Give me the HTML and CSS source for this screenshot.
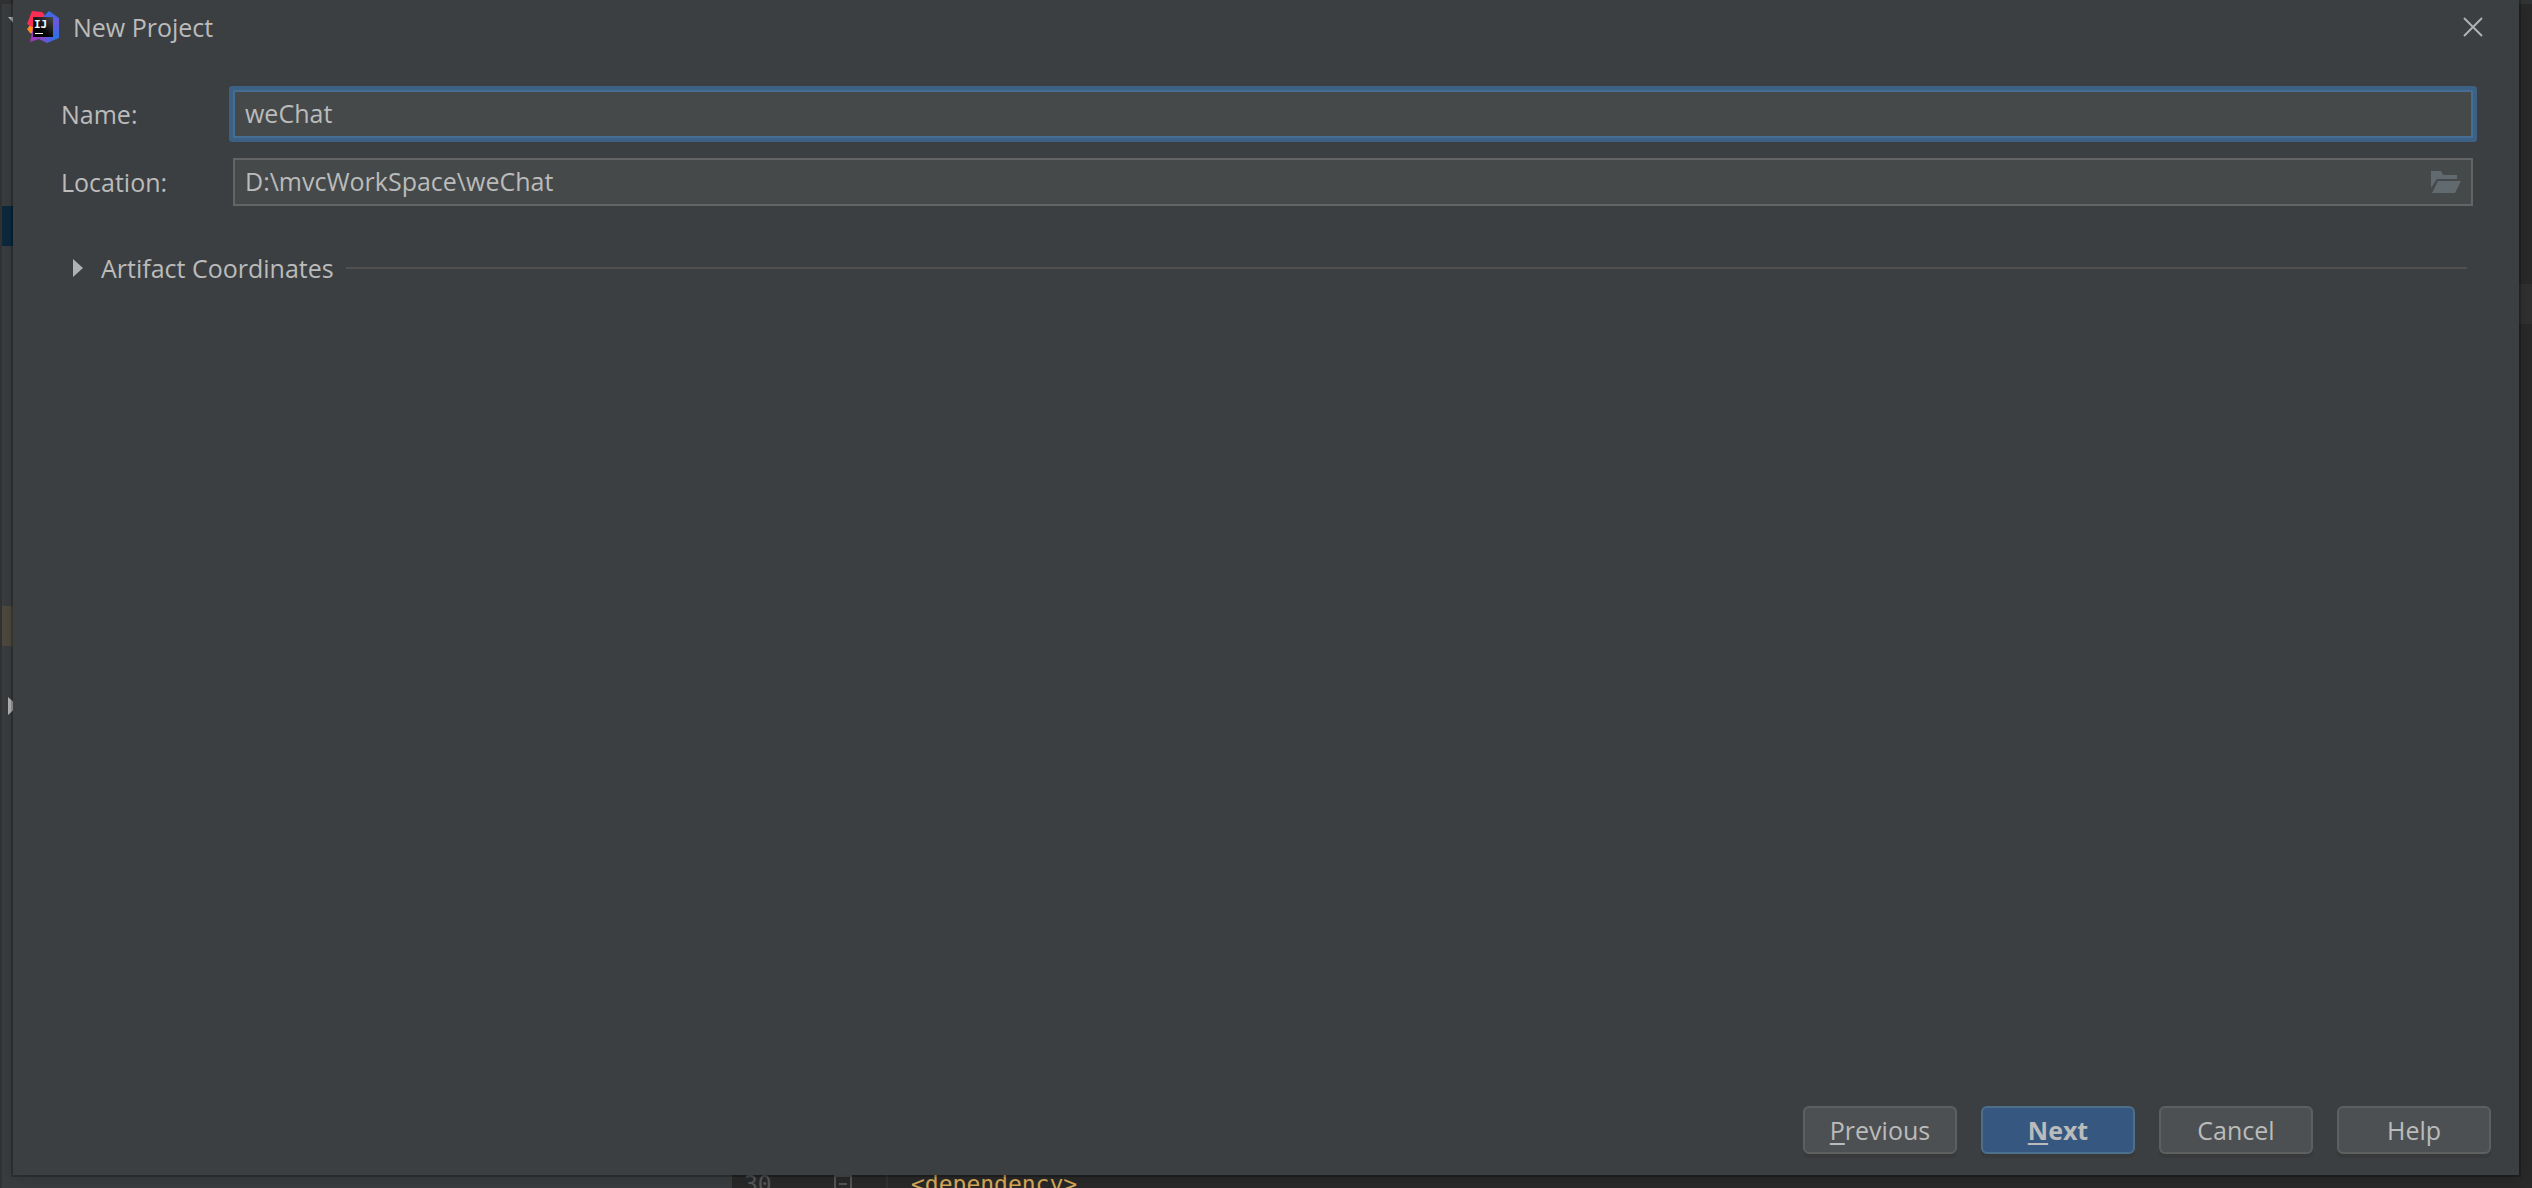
FILE: index.html
```html
<!DOCTYPE html>
<html lang="en">

<head>
    <meta charset="UTF-8">
    <meta name="viewport" content="width=device-width, initial-scale=1.0">
    <title>New Project</title>
    <link rel="stylesheet" href="styles.css">
</head>

<body>
    <!-- IDE window behind the dialog -->
    <div class="ide">
        <div class="tree">
            <div class="tree-row row-first">
                <svg class="tree-arrow" viewBox="0 0 18 18"><path d="M0 0h18L9 10z" /></svg>
            </div>
            <div class="tree-row row-selected"></div>
            <div class="tree-row row-excluded"></div>
            <div class="tree-row row-libraries">
                <svg class="tree-arrow" viewBox="0 0 18 18"><path d="M0 0v18l10-9z" /></svg>
            </div>
        </div>
        <div class="editor">
            <div class="code-row row-current"></div>
            <div class="code-row row-code">
                <span class="line-number">30</span>
                <svg class="fold" viewBox="0 0 18 18"><path d="M1 1h16v16H1zM5 9h8" /></svg>
                <code class="code">&lt;dependency&gt;</code>
            </div>
        </div>
    </div>

    <!-- New Project dialog -->
    <form class="dialog">
        <header class="title-bar">
            <svg class="logo" viewBox="0 0 32 32">
                <defs>
                    <linearGradient id="blue" x1="0" y1="0" x2="0" y2="1">
                        <stop offset="0" stop-color="#2d6fe8" />
                        <stop offset="0.35" stop-color="#6b57dd" />
                        <stop offset="0.8" stop-color="#2f6fe6" />
                    </linearGradient>
                    <linearGradient id="purple" x1="0" y1="0" x2="1" y2="0">
                        <stop offset="0" stop-color="#a135b5" />
                        <stop offset="0.4" stop-color="#8b45cc" />
                        <stop offset="1" stop-color="#2f6fe6" />
                    </linearGradient>
                    <linearGradient id="black" x1="1" y1="0" x2="0.4" y2="0.7">
                        <stop offset="0" stop-color="#4a4a4a" />
                        <stop offset="1" stop-color="#000" />
                    </linearGradient>
                </defs>
                <path fill="#ff8a1e" d="M4 13 0 18l3 4 6 2V13z" />
                <path fill="#fc2d54" d="M5 0 0 13l7 4 12-8-2-6-2-2z" />
                <path fill="url(#blue)" d="m22 0 10 7v20l-12 5-4-26z" />
                <path fill="url(#purple)" d="m6 17-3 14 9-3 8 4 8-5z" />
                <path fill="url(#black)" d="M6 6h20v20H6z" />
                <text class="logo-text" x="7" y="17">IJ</text>
                <path fill="#fff" d="M8 22h8v1H8z" />
            </svg>
            <h1 class="title">New Project</h1>
            <button type="button" class="close" aria-label="Close">
                <svg viewBox="0 0 20 20"><path d="m1 1 18 18M19 1 1 19" /></svg>
            </button>
        </header>

        <main class="content">
            <div class="form-group">
                <label for="name">Name:</label>
                <div class="field focused">
                    <input type="text" id="name" value="weChat" spellcheck="false">
                </div>
            </div>
            <div class="form-group">
                <label for="location">Location:</label>
                <div class="field">
                    <input type="text" id="location" value="D:\mvcWorkSpace\weChat" spellcheck="false">
                    <button type="button" class="browse" aria-label="Browse">
                        <svg viewBox="0 0 30 22"><path d="M0 0h10l2 4h14v4H6L0 17zM7 10h23l-6 12H1z" /></svg>
                    </button>
                </div>
            </div>

            <div class="section">
                <button type="button" class="section-toggle" aria-expanded="false">
                    <svg viewBox="0 0 10 18"><path d="M0 0v18l10-9z" /></svg>
                    Artifact Coordinates
                </button>
                <div class="section-line"></div>
            </div>
        </main>

        <footer class="buttons">
            <button type="button" class="btn"><u>P</u>revious</button>
            <button type="button" class="btn btn-default"><u>N</u>ext</button>
            <button type="button" class="btn">Cancel</button>
            <button type="button" class="btn">Help</button>
        </footer>
    </form>
</body>

</html>
```

FILE: styles.css
```css
* {
    box-sizing: border-box;
}

body {
    margin: 0;
    height: 100vh;
    position: relative;
    overflow: hidden;
    background-color: #323232;
    color: #bbbbbb;
    font-family: "Open Sans", "Noto Sans", sans-serif;
    font-size: 25px;
    line-height: 32px;
}

button,
input {
    font: inherit;
    color: inherit;
}

svg {
    display: block;
}

/* IDE window */
.ide {
    display: flex;
    height: 100%;
    padding-left: 2px;
}

.tree {
    width: 730px;
    display: grid;
    grid-auto-rows: 40px;
    padding-top: 2px;
    border-top: 4px solid #303233;
    background-color: #3a3d3f;
}

.tree-row {
    display: flex;
    align-items: center;
    padding-left: 6px;
}

.row-first {
    grid-row: 1;
}

.row-selected {
    grid-row: 6;
    background-color: #0d293e;
}

.row-excluded {
    grid-row: 16;
    background-color: #4d493e;
}

.row-libraries {
    grid-row: 18;
}

.tree-arrow {
    width: 18px;
    height: 18px;
    fill: #b5b5b5;
}

.editor {
    flex: 1;
    display: grid;
    grid-auto-rows: 40px;
    border-top: 4px solid #313435;
    background-color: #292929;
}

.row-current {
    grid-row: 8;
    background-color: #303030;
}

.row-code {
    grid-row: 30;
    display: flex;
    align-items: center;
    font-family: "DejaVu Sans Mono", monospace;
    font-size: 23px;
}

.line-number {
    width: 102px;
    padding-left: 12px;
    color: #55585a;
}

.fold {
    width: 18px;
    height: 18px;
    margin-right: 34px;
    fill: none;
    stroke: #555555;
    stroke-width: 2;
}

.code {
    height: 40px;
    padding-left: 23px;
    border-left: 2px solid #323232;
    font: inherit;
    line-height: 40px;
    color: #d9a957;
}

/* Dialog */
.dialog {
    position: absolute;
    inset: 0 13px 13px;
    display: flex;
    flex-direction: column;
    background-color: #3c3f41;
    box-shadow: 0 0 0 2px rgba(0, 0, 0, 0.2), 0 2px 14px rgba(0, 0, 0, 0.2);
}

.title-bar {
    display: flex;
    align-items: center;
    gap: 14px;
    height: 54px;
    padding: 0 36px 0 14px;
}

.logo {
    width: 32px;
    height: 32px;
}

.logo-text {
    font-family: "DejaVu Sans Mono", monospace;
    font-size: 11px;
    font-weight: bold;
    fill: #fff;
}

.title {
    flex: 1;
    margin: 0;
    font-size: 25px;
    font-weight: normal;
}

.close {
    padding: 0;
    border: none;
    background: none;
}

.close svg {
    width: 20px;
    height: 20px;
    stroke: #afb1b3;
    stroke-width: 2;
}

.content {
    flex: 1;
    padding: 36px 46px 0 48px;
}

.form-group {
    display: flex;
    align-items: center;
    margin-bottom: 20px;
}

.form-group label {
    width: 172px;
}

.field {
    flex: 1;
    display: flex;
    align-items: center;
    height: 48px;
    padding: 0 10px;
    border: 2px solid #646464;
    background-color: #45494a;
}

.field.focused {
    border-color: #466d94;
    box-shadow: 0 0 0 4px #3d6185;
    border-radius: 1px;
}

.field input {
    flex: 1;
    padding: 0 0 2px;
    border: none;
    outline: none;
    background: none;
}

.browse {
    padding: 0;
    border: none;
    background: none;
}

.browse svg {
    width: 30px;
    height: 22px;
    fill: #616a6e;
}

.section {
    display: flex;
    align-items: center;
    gap: 12px;
    padding: 26px 6px 0 12px;
}

.section-toggle {
    display: flex;
    align-items: center;
    gap: 18px;
    padding: 0;
    border: none;
    background: none;
}

.section-toggle svg {
    width: 10px;
    height: 18px;
    fill: #afb1b3;
}

.section-line {
    flex: 1;
    height: 2px;
    background-color: #515151;
}

.buttons {
    display: flex;
    justify-content: flex-end;
    gap: 24px;
    padding: 0 28px 21px;
}

.btn {
    width: 154px;
    height: 48px;
    padding: 0;
    border: 2px solid #5e6060;
    border-radius: 6px;
    background-color: #4c5052;
    box-shadow: 0 4px 0 #37393a;
}

.btn u {
    text-underline-offset: 3px;
    text-decoration-thickness: 2px;
}

.btn-default {
    border-color: #4c708c;
    background-color: #365880;
    font-weight: bold;
}
```
